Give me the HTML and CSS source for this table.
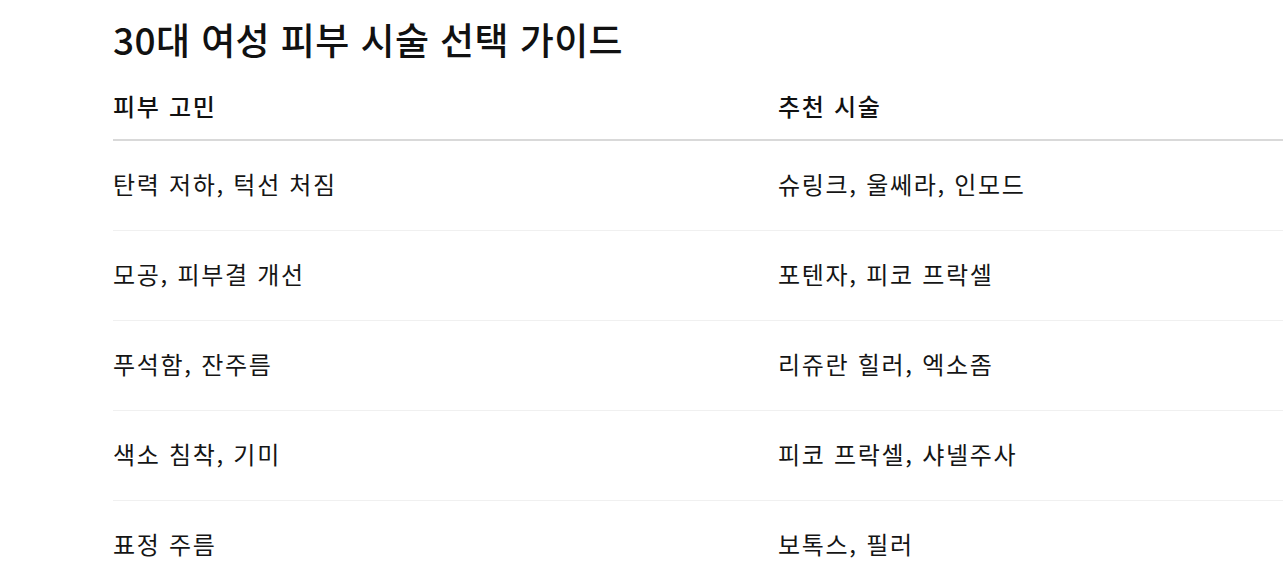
FILE: index.html
```html
<!DOCTYPE html>
<html lang="ko">
<head>
<meta charset="utf-8">
<title>30대 여성 피부 시술 선택 가이드</title>
<link rel="stylesheet" href="styles.css">
</head>
<body>
<main class="page">
  <h1 class="title">30대 여성 피부 시술 선택 가이드</h1>
  <table class="guide">
    <thead>
      <tr><th>피부 고민</th><th>추천 시술</th></tr>
    </thead>
    <tbody>
      <tr><td>탄력 저하, 턱선 처짐</td><td>슈링크, 울쎄라, 인모드</td></tr>
      <tr><td>모공, 피부결 개선</td><td>포텐자, 피코 프락셀</td></tr>
      <tr><td>푸석함, 잔주름</td><td>리쥬란 힐러, 엑소좀</td></tr>
      <tr><td>색소 침착, 기미</td><td>피코 프락셀, 샤넬주사</td></tr>
      <tr><td>표정 주름</td><td>보톡스, 필러</td></tr>
    </tbody>
  </table>
</main>
</body>
</html>
```

FILE: styles.css
```css
html, body {
  margin: 0;
  padding: 0;
  background: #fff;
  overflow: hidden;
}
body {
  font-family: "Noto Sans CJK KR", "Noto Sans", sans-serif;
  color: #111;
}
.page {
  padding: 14px 0 0 113px;
}
.title {
  margin: 0;
  font-size: 37px;
  font-weight: 500;
  line-height: 50px;
  letter-spacing: 0.4px;
  color: #111;
}
.guide {
  width: 1330px;
  border-collapse: collapse;
  margin-top: 7px;
  table-layout: fixed;
}
.guide th, .guide td {
  text-align: left;
  padding: 0;
  font-size: 24px;
  letter-spacing: 1.7px;
  vertical-align: middle;
}
.guide th {
  font-weight: 500;
  height: 68px;
  border-bottom: 2px solid #d9d9d9;
}
.guide td {
  font-weight: 400;
  height: 85px;
  padding-bottom: 4px;
  border-bottom: 1px solid #f0f0f0;
  color: #151515;
}
```
